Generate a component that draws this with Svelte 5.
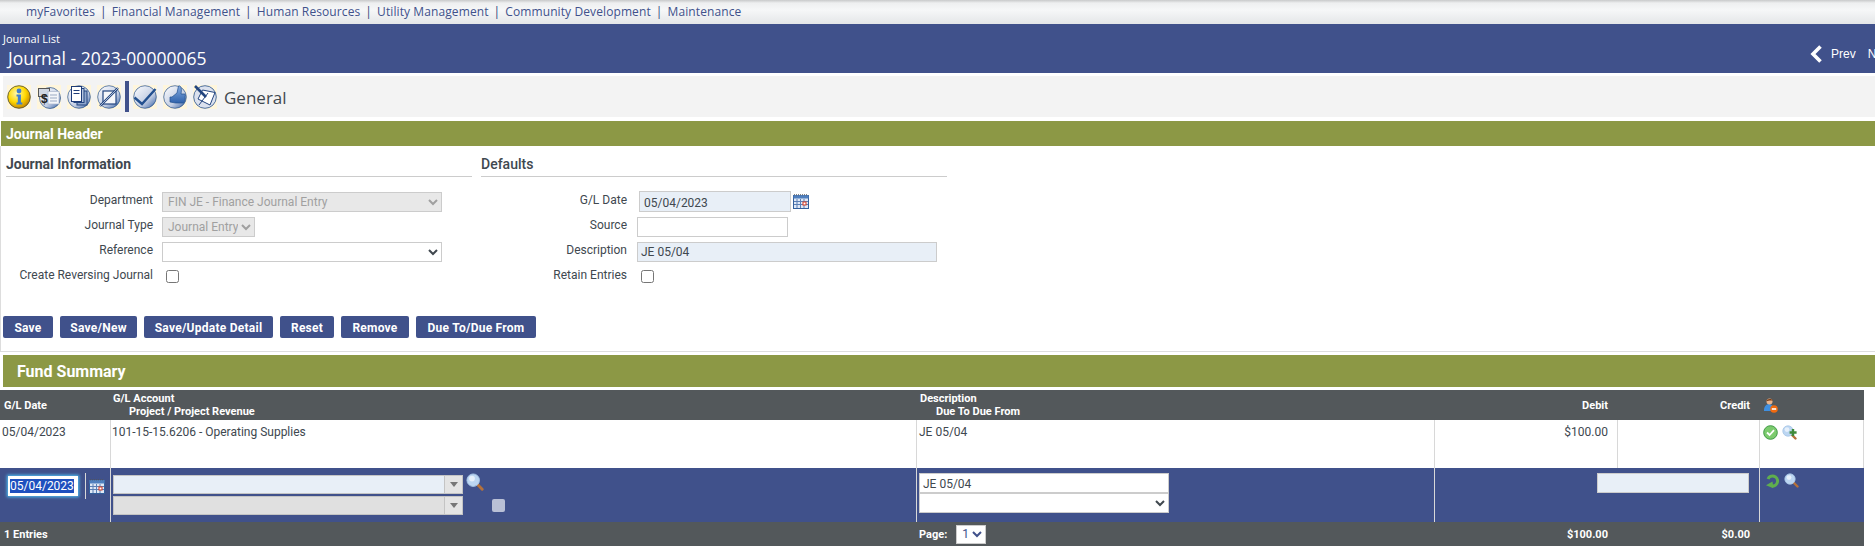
<script>
  import { onMount } from 'svelte';
  let dateInput;
  onMount(() => { dateInput.focus(); dateInput.select(); });
  const navItems = ['myFavorites', 'Financial Management', 'Human Resources', 'Utility Management', 'Community Development', 'Maintenance'];
  const buttons = ['Save', 'Save/New', 'Save/Update Detail', 'Reset', 'Remove', 'Due To/Due From'];
</script>

{#snippet cal()}
  <svg class="cal" viewBox="0 0 16 15" width="16" height="15">
    <rect x="0.5" y="1.5" width="15" height="13" fill="#dfe8f6" stroke="#34609c"/>
    <rect x="0.5" y="1" width="15" height="3.5" fill="#4f7fbe"/>
    <path d="M1 0.8h14" stroke="#555" stroke-dasharray="1 1"/>
    <path d="M4 5v9M7.5 5v9M11 5v9M1 7.5h14M1 10.5h14" stroke="#5b7fb5"/>
    <rect x="10" y="8" width="3" height="3" fill="#fff" stroke="#d9381e"/>
  </svg>
{/snippet}

{#snippet glass(plus, size)}
  <svg viewBox="0 0 15 15" width={size} height={size}>
    <line x1="9" y1="9" x2="13.5" y2="13.5" stroke="#b5713a" stroke-width="2.4" stroke-linecap="round"/>
    <circle cx="6" cy="6" r="5.2" fill="#bcd6f2" stroke="#a6c5e6" stroke-width="0.8"/>
    <circle cx="5" cy="4.6" r="2.4" fill="#e6f0fb"/>
    {#if plus}<path d="M11 4v7M7.6 7.5h7" stroke="#3f8a3a" stroke-width="2.4"/>{/if}
  </svg>
{/snippet}

<div class="page">
  <nav class="topnav">
    {#each navItems as item, i}
      {#if i > 0}<span class="sep">|</span>{/if}<span>{item}</span>
    {/each}
  </nav>

  <header class="banner">
    <div class="crumbs">
      <div class="crumb">Journal List</div>
      <div class="title">Journal - 2023-00000065</div>
    </div>
    <div class="pager">
      <svg viewBox="0 0 13 18" width="13" height="18"><path d="M10.5 1.5 3 9l7.5 7.5" fill="none" stroke="#fff" stroke-width="3.6"/></svg>
      <span class="prev">Prev</span>
      <span class="next">N</span>
    </div>
  </header>

  <div class="toolbar">
    <span class="ico">
      <svg viewBox="0 0 24 24">
        <defs>
          <radialGradient id="gy" cx="40%" cy="35%" r="65%"><stop offset="0" stop-color="#fff9b0"/><stop offset="0.6" stop-color="#ffd800"/><stop offset="1" stop-color="#c98a00"/></radialGradient>
          <linearGradient id="gb" x1="0.1" y1="0.1" x2="0.9" y2="0.95"><stop offset="0" stop-color="#f4f6fb"/><stop offset="0.62" stop-color="#c3cee3"/><stop offset="0.85" stop-color="#7c97c4"/><stop offset="1" stop-color="#2a5a9c"/></linearGradient>
          <linearGradient id="gt" x1="0" y1="0" x2="0" y2="1"><stop offset="0" stop-color="#86acdf"/><stop offset="1" stop-color="#2f62ac"/></linearGradient>
        </defs>
        <circle cx="12" cy="12" r="11.3" fill="url(#gy)" stroke="#4a4a30" stroke-width="0.8"/>
        <circle cx="12" cy="6" r="2.4" fill="#3f7fd0"/>
        <path d="M9.5 9.5h4.4v8h1.4v2H9.5v-2h1.3v-6H9.5z" fill="#3f7fd0"/>
      </svg>
    </span>
    <span class="ico">
      <svg viewBox="0 0 24 24">
        <circle cx="13" cy="13" r="10.5" fill="url(#gb)" stroke="#27508a" stroke-width="0.7"/>
        <rect x="1.5" y="3.5" width="11" height="8" fill="#cfd6e2" stroke="#555"/>
        <rect x="11" y="6.5" width="11" height="12.5" fill="#f4f6fa" stroke="#aab6cc" stroke-width="0.7"/>
        <path d="M13 10h7M13 13h7M13 16h7" stroke="#9aa9c2"/>
        <text x="4" y="18" class="dollar">$</text>
      </svg>
    </span>
    <span class="ico">
      <svg viewBox="0 0 24 24">
        <circle cx="12" cy="12" r="11.3" fill="url(#gb)" stroke="#27508a" stroke-width="0.7"/>
        <rect x="10" y="6" width="10" height="14" fill="#8fa6cc" stroke="#23457f"/>
        <rect x="7" y="3.5" width="10" height="14" fill="#b6c6e0" stroke="#23457f"/>
        <rect x="4.5" y="1.5" width="10" height="15" fill="#fff" stroke="#1d3b78"/>
        <path d="M6.5 5.5h6M6.5 8.5h6" stroke="#1d3b78"/>
      </svg>
    </span>
    <span class="ico">
      <svg viewBox="0 0 24 24">
        <circle cx="12" cy="12" r="11.3" fill="url(#gb)" stroke="#27508a" stroke-width="0.7"/>
        <rect x="6" y="6" width="13" height="13" fill="#f6f7fa" stroke="#23457f" stroke-width="1.2"/>
        <path d="M3 21 21 3" stroke="#23457f" stroke-width="2.4"/>
        <path d="M3 21 21 3" stroke="#cfd9ea" stroke-width="0.8"/>
      </svg>
    </span>
    <span class="divider"></span>
    <span class="ico">
      <svg viewBox="0 0 24 24">
        <circle cx="12" cy="12" r="11.3" fill="url(#gb)" stroke="#27508a" stroke-width="0.7"/>
        <path d="M1.5 12.5 9 19 22.5 4" fill="none" stroke="#23508f" stroke-width="2.4"/>
      </svg>
    </span>
    <span class="ico">
      <svg viewBox="0 0 24 24">
        <circle cx="12" cy="12" r="11.3" fill="url(#gb)" stroke="#27508a" stroke-width="0.7"/>
        <path d="M7 12h2l5-4 1.500-7c2.500-1 3.500 3 2.500 8h3.500c1 0 1 2 .4 3 .5 1 .2 2-.4 3 .2 1 0 2-1 3h-8l-5.500-1z" fill="url(#gt)" stroke="#23508f" stroke-width="0.7"/>
      </svg>
    </span>
    <span class="ico">
      <svg viewBox="0 0 24 24">
        <circle cx="12" cy="12" r="11.3" fill="#dbe1ee" stroke="#27508a" stroke-width="0.8"/>
        <path d="M9.500 5 22 7.500 17 20 5 14z" fill="#fff" stroke="#23457f"/>
        <path d="M2 1 13 12" stroke="#23457f" stroke-width="2.6"/>
        <path d="M6 20 15 8" stroke="#23457f" stroke-width="1"/>
      </svg>
    </span>
    <span class="tooltitle">General</span>
  </div>

  <div class="greenbar small">Journal Header</div>

  <section class="formbox">
    <div class="cols">
      <div class="col left">
        <h3>Journal Information</h3>
        <div class="grid">
          <label for="d">Department</label>
          <select id="d" class="wdept" disabled><option>FIN JE - Finance Journal Entry</option></select>
          <label for="t">Journal Type</label>
          <select id="t" class="wtype" disabled><option>Journal Entry</option></select>
          <label for="r">Reference</label>
          <select id="r" class="wdept active"><option></option></select>
          <label for="c">Create Reversing Journal</label>
          <div><input id="c" type="checkbox" /></div>
        </div>
      </div>
      <div class="col right">
        <h3>Defaults</h3>
        <div class="grid rgrid">
          <label for="gd">G/L Date</label>
          <div class="dateline"><input id="gd" class="date blue" value="05/04/2023" />{@render cal()}</div>
          <label for="s">Source</label>
          <input id="s" class="source" />
          <label for="de">Description</label>
          <input id="de" class="descr blue" value="JE 05/04" />
          <label for="re">Retain Entries</label>
          <div><input id="re" type="checkbox" /></div>
        </div>
      </div>
    </div>
    <div class="buttons">
      {#each buttons as b}<button type="button">{b}</button>{/each}
    </div>
  </section>

  <div class="greenbar large">Fund Summary</div>

  <div class="table">
    <div class="thead trow">
      <div class="c"><span class="mid">G/L Date</span></div>
      <div class="c two"><div>G/L Account</div><div class="ind">Project / Project Revenue</div></div>
      <div class="c two desc-h"><div>Description</div><div class="ind">Due To Due From</div></div>
      <div class="c num"><span class="mid">Debit</span></div>
      <div class="c num"><span class="mid">Credit</span></div>
      <div class="c act">
        <svg viewBox="0 0 15 15" width="15" height="15">
          <path d="M1 12c0-4 3-6 5-6s5 2 5 6v1H1z" fill="#3f8fe0"/>
          <circle cx="6.5" cy="3.6" r="3" fill="#e9b48c"/>
          <path d="M3.400 3.400C3.400 0.500 9.600 0.200 9.800 3 8 2 5 3 3.400 3.400z" fill="#7c3d16"/>
          <circle cx="11" cy="11" r="3.800" fill="#f06a10"/>
          <rect x="8.800" y="10.200" width="4.400" height="1.600" fill="#fff"/>
        </svg>
      </div>
    </div>

    <div class="tbody trow">
      <div class="c date-c">05/04/2023</div>
      <div class="c b acc">101-15-15.6206 - Operating Supplies</div>
      <div class="c b dsc">JE 05/04</div>
      <div class="c b num amt">$100.00</div>
      <div class="c b"></div>
      <div class="c b act icons">
        <svg viewBox="0 0 15 15" width="15" height="15">
          <circle cx="7.500" cy="7.500" r="6.800" fill="#7ccb6e" stroke="#3f9a45"/>
          <path d="M4 7.500 6.600 10 11 5.200" fill="none" stroke="#fff" stroke-width="1.800"/>
        </svg>
        {@render glass(true, 15)}
      </div>
    </div>

    <div class="tedit trow">
      <div class="c datecell">
        <input bind:this={dateInput} class="seldate" value="05/04/2023" />
        <span class="vline"></span>
        {@render cal()}
      </div>
      <div class="c b accedit">
        <div class="combos">
          <div class="combo lightblue"><span class="arrowbox"><i></i></span></div>
          <div class="combo grayed"><span class="arrowbox"><i></i></span></div>
        </div>
        <div class="side">
          {@render glass(false, 18)}
          <span class="dischk"></span>
        </div>
      </div>
      <div class="c b dscedit">
        <input class="dinput" value="JE 05/04" />
        <select class="dselect active"><option></option></select>
      </div>
      <div class="c b spacer"></div>
      <div class="c credit"><input class="cinput blue" /></div>
      <div class="c b act icons edit-icons">
        <svg viewBox="0 0 15 15" width="15" height="15">
          <path d="M3 6A5 5 0 1 1 7.500 13" fill="none" stroke="#5fae4e" stroke-width="3"/>
          <path d="M1 11.500 8 8.500v7z" fill="#5fae4e" transform="rotate(-8 7 12)"/>
        </svg>
        {@render glass(false, 15)}
      </div>
    </div>

    <div class="tfoot trow">
      <div class="c foot"><span class="mid">1 Entries</span></div>
      <div class="c"></div>
      <div class="c foot pagec"><span>Page:</span><select class="pagesel active"><option>1</option></select></div>
      <div class="c num foot"><span class="mid">$100.00</span></div>
      <div class="c num foot"><span class="mid">$0.00</span></div>
      <div class="c"></div>
    </div>
  </div>
</div>

<style>
  :global(html), :global(body) { margin: 0; overflow: hidden; background: #fff; }
  .page { width: 1875px; height: 558px; overflow: hidden; font-family: Roboto, sans-serif; font-size: 12px; color: #40484f; }

  .topnav { height: 24px; box-sizing: border-box; padding: 4px 0 0 26px; display: flex; gap: 5px; align-items: flex-start;
    font-family: "Open Sans", sans-serif; font-size: 12px; letter-spacing: 0.1px; line-height: 16px; color: #40518b;
    background: linear-gradient(#c8c9ca 0, #eeeff0 3px, #f6f7f8 10px, #e4e6e8 24px); }
  .sep { color: #2f3f78; }

  .banner { height: 49px; background: #40518b; color: #fff; display: flex; justify-content: space-between; }
  .crumb { font-family: "Open Sans", sans-serif; font-size: 11px; line-height: 14px; padding: 8px 0 0 3px; }
  .title { font-family: "Open Sans", sans-serif; font-size: 17.500px; line-height: 24px; padding: 0 0 0 8px; }
  .pager { width: 65px; flex: none; display: flex; align-items: center; gap: 8px; padding-top: 10px; box-sizing: border-box;
    font-family: "Liberation Sans", sans-serif; font-size: 12px; white-space: nowrap; }
  .pager svg { flex: none; }
  .next { margin-left: 4px; }

  .toolbar { margin: 3px 0 0 3px; height: 41px; background: #f3f3f3; display: flex; align-items: center; box-sizing: border-box; padding: 0 0 0 4px; gap: 6px; }
  .ico { width: 24px; height: 24px; background: #fff6dc; flex: none; display: block; }
  .ico svg { display: block; width: 24px; height: 24px; }
  .dollar { font: bold 12px "Liberation Sans", sans-serif; fill: #222; }
  .divider { width: 4px; height: 31px; background: #40518b; flex: none; margin: 0 -2px 0 -2px; }
  .tooltitle { font-family: "Open Sans", sans-serif; font-size: 17px; color: #40484f; margin: 1px 0 0 1px; }

  .greenbar { background: #8c9845; color: #fff; font-weight: 700; }
  .greenbar.small { margin: 4px 0 0 1px; height: 25px; line-height: 27px; padding-left: 5px; font-size: 14px; }
  .greenbar.large { margin: 3px 0 0 3px; height: 32px; line-height: 33px; padding-left: 14px; font-size: 16px; }

  .formbox { height: 206px; box-sizing: border-box; border-left: 1px solid #ddd; border-bottom: 1px solid #ddd; }
  .cols { display: flex; height: 170px; }
  .col h3 { margin: 0; font-size: 14px; font-weight: 700; line-height: 17px; padding-top: 10px; height: 31px; box-sizing: border-box; border-bottom: 1px solid #ccc; color: #40484f; }
  .col.left { width: 466px; margin-left: 5px; }
  .col.right { width: 466px; margin-left: 9px; }
  .col.right h3 { font-weight: 500; }
  .grid { display: grid; grid-template-columns: 147px 1fr; column-gap: 9px; row-gap: 4px; margin-top: 14px; grid-auto-rows: 21px; align-items: center; }
  .grid label { text-align: right; line-height: 14px; margin-top: -3px; color: #40484f; }
  .rgrid { grid-template-columns: 146px 1fr; column-gap: 10px; }

  select { font-family: Roboto, sans-serif; font-size: 12px; height: 20px; box-sizing: border-box; border: 1px solid #ccc; background-color: #e8e8e8; color: #a0a0a0; border-radius: 0; margin: 0; padding: 0 0 0 1px; }
  select:disabled { opacity: 1; }
  select.active { background-color: #fff; color: #40484f; }
  .wdept { width: 280px; }
  .wtype { width: 93px; }
  input[type="checkbox"] { margin: 0 0 0 4px; width: 13px; height: 13px; display: block; }
  input:not([type]) { font-family: Roboto, sans-serif; font-size: 12px; color: #40484f; box-sizing: border-box; border: 1px solid #ccc; border-radius: 0; margin: 0; padding: 1px 3px 0; height: 20px; background: #fff; outline: none; }
  input.blue { background: #e8eff7; }
  .dateline { display: flex; align-items: center; gap: 2px; margin-left: 2px; }
  input.date { width: 152px; height: 21px; padding-left: 4px; padding-top: 2px; }
  input.source { width: 151px; }
  input.descr { width: 300px; }
  .cal { display: block; flex: none; }

  .buttons { display: flex; gap: 7px; padding-left: 2px; }
  button { font-family: Roboto, sans-serif; font-size: 12px; font-weight: 700; letter-spacing: 0.25px; height: 22px; color: #fff; background: #40518b; border: 0; border-radius: 2px; padding: 1px 0 0; margin: 0; }
  button:nth-child(1) { width: 50px; }
  button:nth-child(2) { width: 77px; }
  button:nth-child(3) { width: 129px; }
  button:nth-child(4) { width: 54px; }
  button:nth-child(5) { width: 68px; }
  button:nth-child(6) { width: 120px; }

  .table { margin-top: 3px; width: 1864px; }
  .trow { display: grid; grid-template-columns: 110px 806px 518px 183px 142px 105px; }
  .c { box-sizing: border-box; min-width: 0; }
  .thead { height: 30px; background: #53585b; color: #fff; font-weight: 700; font-size: 11px; }
  .thead .c { display: flex; flex-direction: column; justify-content: center; }
  .thead .c:first-child { padding-left: 4px; }
  .two { line-height: 13px; padding-left: 3px; }
  .two .ind { padding-left: 16px; }
  .desc-h { padding-left: 4px; }
  .num { text-align: right; padding-right: 9px; }
  .thead .act { padding-left: 4px; }
  .act svg { display: block; }

  .tbody { height: 48px; background: #fff; }
  .tbody .c { padding-top: 5px; line-height: 14px; }
  .date-c { padding-left: 2px; }
  .b { border-left: 1px solid #d8d8d8; }
  .acc { padding-left: 1px; }
  .dsc { padding-left: 2px; }
  .amt { padding-right: 9px; }
  .icons { display: flex; gap: 4px; padding-left: 3px; border-right: 1px solid #d8d8d8; }

  .tedit { height: 54px; background: #40518b; }
  .datecell { display: flex; align-items: flex-start; padding: 5px 0 0 8px; }
  .seldate { width: 70px !important; height: 20px !important; margin-top: 3px !important; padding: 0 1px !important; border: 1px solid #fff !important; box-shadow: 0 0 3px 1px #4fc3f7; }
  .seldate::selection { background: #1e50be; color: #fff; }
  .vline { width: 1px; height: 26px; background: #d8d8d8; margin: 0 3px 0 7px; flex: none; }
  .datecell .cal { margin-top: 6px; }
  .accedit { display: flex; padding: 7px 0 0 2px; }
  .combos { width: 350px; display: flex; flex-direction: column; gap: 2px; }
  .combo { height: 19px; box-sizing: border-box; border: 1px solid #c4c4c4; display: flex; justify-content: flex-end; }
  .lightblue { background: #e8eff7; }
  .grayed { background: #e0e0e0; }
  .arrowbox { width: 17px; background: #e4e4e4; border-left: 1px solid #c4c4c4; display: flex; align-items: center; justify-content: center; }
  .arrowbox i { width: 0; height: 0; border: 4px solid transparent; border-top: 5px solid #777; margin-top: 4px; }
  .side { margin-left: 3px; }
  .side svg { display: block; margin-top: -2px; }
  .dischk { display: block; width: 13px; height: 13px; background: #b9c0d6; border-radius: 2px; margin: 8px 0 0 26px; }
  .dscedit { padding: 5px 0 0 2px; display: flex; flex-direction: column; }
  .dinput { width: 250px !important; height: 20px !important; }
  .dselect { width: 250px; height: 20px; }
  .cinput { width: 152px !important; height: 20px !important; margin: 5px 0 0 -20px !important; display: block; position: relative; }
  .edit-icons { padding-top: 5px; padding-left: 5px; border-right: 0; }

  .tfoot { height: 24px; background: #53585b; color: #fff; font-weight: 700; font-size: 11px; }
  .foot { display: flex; align-items: center; }
  .foot:first-child { padding-left: 4px; }
  .num.foot { justify-content: flex-end; }
  .pagec { padding-left: 3px; gap: 9px; }
  .pagesel { width: 30px; height: 19px; font-size: 12px; color: #40518b !important; }
  .tooltitle, .title, .crumb { white-space: nowrap; }
</style>
